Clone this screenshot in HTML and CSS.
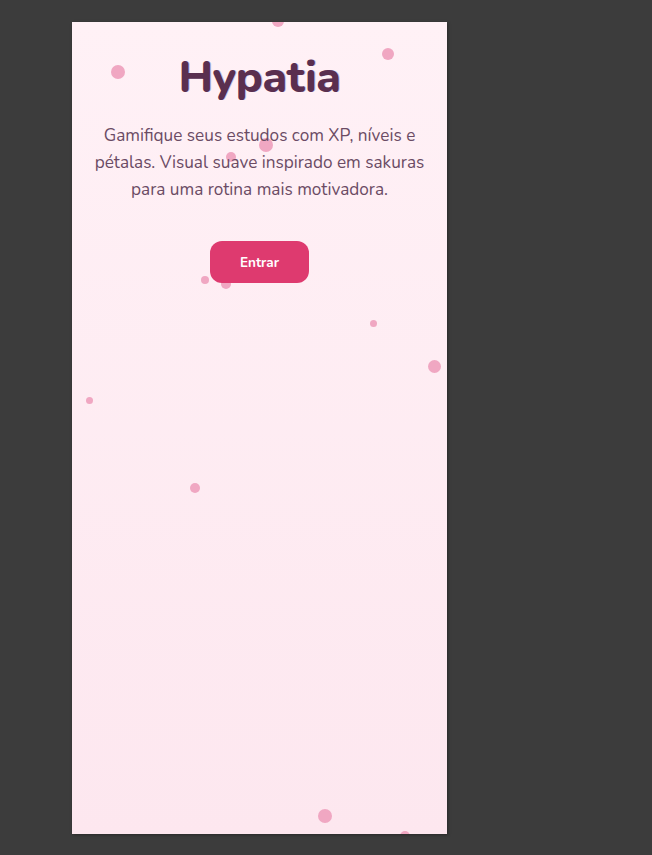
FILE: index.html
```html
<!DOCTYPE html>
<html lang="pt-BR">
<head>
<meta charset="utf-8">
<title>Hypatia</title>
<link rel="stylesheet" href="styles.css">
</head>
<body>
<div class="stage">
  <main class="phone">
    <div class="petals" aria-hidden="true">
      <span class="petal" style="left:200px;top:-7px;width:12px;height:12px"></span>
      <span class="petal" style="left:39px;top:43px;width:14px;height:14px"></span>
      <span class="petal" style="left:310px;top:26px;width:12px;height:12px"></span>
      <span class="petal" style="left:187px;top:116px;width:14px;height:14px"></span>
      <span class="petal" style="left:154px;top:130px;width:10px;height:10px"></span>
      <span class="petal" style="left:129px;top:254px;width:8px;height:8px"></span>
      <span class="petal" style="left:149px;top:257px;width:10px;height:10px"></span>
      <span class="petal" style="left:298px;top:298px;width:7px;height:7px"></span>
      <span class="petal" style="left:356px;top:338px;width:13px;height:13px"></span>
      <span class="petal" style="left:14px;top:375px;width:7px;height:7px"></span>
      <span class="petal" style="left:118px;top:461px;width:10px;height:10px"></span>
      <span class="petal" style="left:246px;top:787px;width:14px;height:14px"></span>
      <span class="petal" style="left:328px;top:809px;width:10px;height:10px"></span>
    </div>
    <section class="hero">
      <h1 class="title">Hypatia</h1>
      <p class="lead">Gamifique seus estudos com XP, níveis e pétalas. Visual suave inspirado em sakuras para uma rotina mais motivadora.</p>
      <button class="cta" type="button">Entrar</button>
    </section>
  </main>
</div>
</body>
</html>
```
FILE: styles.css
```css
html, body {
  margin: 0;
  padding: 0;
}
body {
  background: #3c3c3c;
  font-family: Nunito, "Noto Sans", "Open Sans", sans-serif;
}
.stage {
  padding: 22px 0 0 72px;
  height: 855px;
  box-sizing: border-box;
}
.phone {
  position: relative;
  width: 375px;
  height: 812px;
  overflow: hidden;
  background: linear-gradient(180deg, #fff1f6 0%, #fde7ef 100%);
  box-shadow: 1px 1px 3px rgba(0,0,0,0.35);
}
.petals {
  position: absolute;
  inset: 0;
  pointer-events: none;
}
.petal {
  position: absolute;
  border-radius: 50%;
  background: #f0a7c2;
}
.hero {
  position: relative;
  display: flex;
  flex-direction: column;
  align-items: center;
  padding: 26px 16px 0;
  text-align: center;
}
.title {
  margin: 0;
  font-size: 44.5px;
  font-weight: 800;
  line-height: 60px;
  color: #5a2f4f;
  text-shadow: 1px 0 0 rgba(80,100,200,0.3);
  letter-spacing: -0.5px;
}
.lead {
  margin: 14px 0 0;
  font-size: 17.2px;
  line-height: 27px;
  color: #6b4b64;
  max-width: 345px;
}
.cta {
  margin-top: 38px;
  width: 99px;
  height: 42px;
  border: 0;
  border-radius: 12px;
  background: #de3a6f;
  color: #fff;
  font-family: inherit;
  font-weight: 700;
  font-size: 13.5px;
}
```
